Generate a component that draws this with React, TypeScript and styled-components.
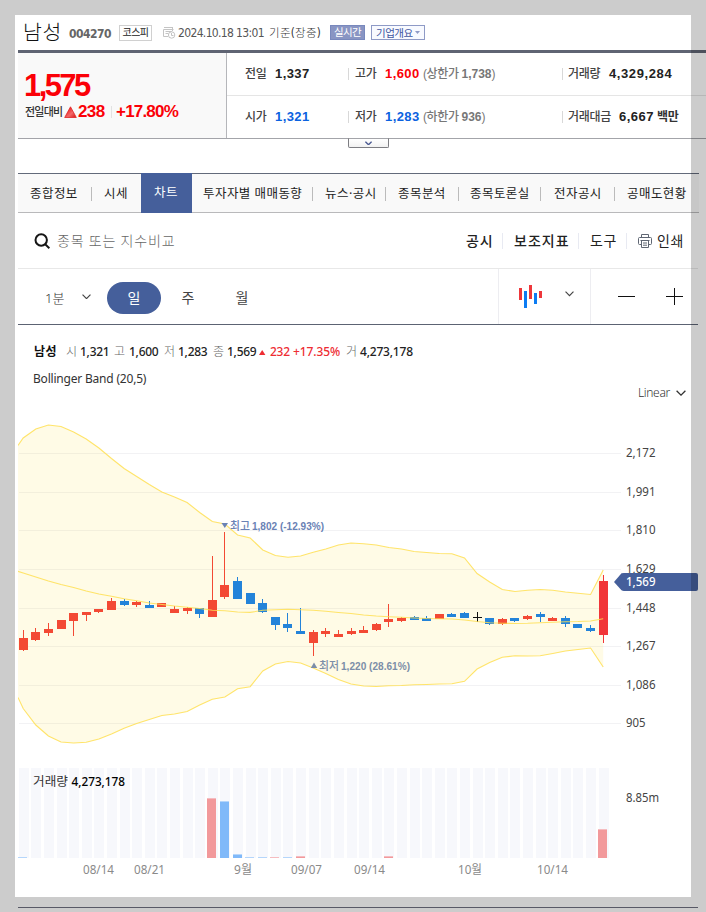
import React from 'react';
import styled, { createGlobalStyle, css } from 'styled-components';

const GlobalStyle = createGlobalStyle`
  * { box-sizing: border-box; }
  html, body { margin: 0; padding: 0; background: #fff; }
  body { overflow: hidden; font-family: "Noto Sans", "Noto Sans CJK KR", sans-serif; }
`;

const gulim = '"DejaVu Sans Condensed", "DejaVu Sans", "Noto Sans CJK KR", sans-serif';
const arial = '"Liberation Sans", "Noto Sans CJK KR", sans-serif';
const malgun = '"Noto Sans", "Noto Sans CJK KR", sans-serif';

type TextProps = {
  $size?: number;
  $weight?: number;
  $color?: string;
  $track?: number;
  $drop?: number;
};

const Text = styled.span<TextProps>`
  display: block;
  white-space: nowrap;
  font-size: ${p => p.$size ?? 12}px;
  font-weight: ${p => p.$weight ?? 400};
  color: ${p => p.$color ?? '#222'};
  letter-spacing: ${p => p.$track ?? 0}px;
  ${p => p.$drop !== undefined && css`padding-top: ${p.$drop}px;`}
`;

const Page = styled.main`
  position: relative;
  width: 706px;
  height: 912px;
  padding-left: 18px;
  overflow: hidden;
  background: #fff;
  display: flex;
  flex-direction: column;
`;

/* Dims everything outside of the captured area. */
const Shade = styled.div`
  position: absolute;
  inset: 0;
  border: 15px solid rgba(0, 0, 0, 0.2);
  pointer-events: none;
`;

/* ---------- title ---------- */

const TitleBar = styled.header`
  flex: none;
  height: 53px;
  padding: 15px 0 0 5px;
  border-bottom: 3px solid #5f6473;
  display: grid;
  grid-template-columns: 46px 50px 44px 15px 152px 41px auto;
  align-items: center;
  line-height: 18px;
  font-family: ${gulim};
`;

const StockName = styled.h1`
  margin: 0;
  padding-bottom: 2px;
  font: 300 20.5px/24px ${malgun};
  letter-spacing: 0.6px;
  color: #111;
  white-space: nowrap;
`;

const MarketTag = styled.span`
  width: 33px;
  height: 16px;
  border: 1px solid #d0d0d0;
  font: 400 10px/13px ${malgun};
  letter-spacing: -0.6px;
  color: #222;
  text-align: center;
  white-space: nowrap;
`;

const DateLine = styled.div`
  display: grid;
  grid-template-columns: 91px auto;
  align-items: center;
`;

const LiveTag = styled.span`
  width: 35px;
  height: 15px;
  border: 1px solid #7888bd;
  background: #8995c3;
  color: #fff;
  font: 400 10.5px/12px ${malgun};
  letter-spacing: -0.6px;
  text-align: center;
  white-space: nowrap;
`;

const OverviewButton = styled.button`
  width: 54px;
  height: 15px;
  padding: 0 4px;
  border: 1px solid #8e9ac6;
  background: #f8faff;
  color: #40569f;
  display: flex;
  align-items: center;
  justify-content: space-between;
  font: 400 10.5px/12px ${malgun};
  letter-spacing: -0.5px;
  white-space: nowrap;
`;

/* ---------- quote summary ---------- */

const Summary = styled.section`
  flex: none;
  height: 86px;
  border-bottom: 1px solid #a3a4a9;
  display: grid;
  grid-template-columns: 209px 1fr;
  font-family: ${arial};
`;

const PriceBox = styled.div`
  padding: 17px 0 0 6px;
  background: #f9f9f9;
  border-right: 1px solid #b5b6ba;
`;

const Price = styled.div`
  height: 30px;
  line-height: 31px;
  font-size: 31px;
  font-weight: 700;
  letter-spacing: -2.6px;
  color: #fb0007;
`;

const ChangeRow = styled.div`
  margin-top: 2px;
  padding-left: 1px;
  display: grid;
  grid-template-columns: 39px 14px 33px 5px auto;
  align-items: center;
  line-height: 20px;
`;

const QuoteGrid = styled.div`
  display: grid;
  grid-template-rows: 42px 43px;
`;

const QuoteRow = styled.div<{ $wideLabel?: boolean }>`
  display: grid;
  grid-template-columns: 18px 30px 73px 7px 30px 38px 139px 6px ${p => (p.$wideLabel ? 51 : 41)}px auto;
  align-items: center;
  line-height: 20px;
  & + & { border-top: 1px solid #e5e5e5; }
`;

const Limit = styled.span`
  color: #777;
  font-size: 12px;
  font-weight: 500;
  letter-spacing: -0.4px;
  white-space: nowrap;
  b { font-weight: 700; letter-spacing: 0; }
`;

const Amount = styled.div`
  display: flex;
  gap: 3px;
`;

const Bar = styled.i<{ $h?: number; $color?: string }>`
  width: 1px;
  height: ${p => p.$h ?? 12}px;
  background: ${p => p.$color ?? '#d8d8d8'};
`;

const ExpandButton = styled.button`
  flex: none;
  width: 41px;
  height: 10px;
  margin: -1px 0 0 330px;
  padding: 0;
  border: 1px solid #7d7d82;
  border-top-color: #a3a4a9;
  border-radius: 0 0 2px 2px;
  background: linear-gradient(#fff, #f2f2f2);
  display: flex;
  align-items: center;
  justify-content: center;
`;

/* ---------- tabs ---------- */

const Tabs = styled.nav`
  flex: none;
  width: 681px;
  height: 40px;
  margin-top: 25px;
  border-top: 1px solid #626a7a;
  border-bottom: 1px solid #b9b9bb;
  background: #f9f9f9;
  display: flex;
`;

const Tab = styled.a<{ $w: number; $pad: number; $active?: boolean }>`
  flex: none;
  width: ${p => p.$w}px;
  height: ${p => (p.$active ? 40 : 39)}px;
  margin-top: ${p => (p.$active ? -1 : 0)}px;
  padding-left: ${p => p.$pad}px;
  background: ${p => (p.$active ? '#455f9b' : 'transparent')};
  color: ${p => (p.$active ? '#fff' : '#222')};
  font: 400 12.5px/${p => (p.$active ? 40 : 39)}px ${malgun};
  letter-spacing: 0.45px;
  white-space: nowrap;
  display: flex;
  justify-content: space-between;
  align-items: center;
`;

/* ---------- toolbars ---------- */

const SearchBar = styled.div`
  flex: none;
  width: 680px;
  height: 56px;
  border-bottom: 1px solid #e8e8e8;
  display: grid;
  grid-template-columns: 16px 23px 409px 36px 12px 64px 12px 36px 12px 19px auto;
  align-items: center;
  line-height: 20px;
  & > svg { display: block; }
`;

const RangeBar = styled.div`
  flex: none;
  width: 680px;
  height: 56px;
  border-bottom: 1px solid #5c6373;
  display: grid;
  grid-template-columns: 89px 54px 54px 283px 93px auto;
  align-items: center;
`;

const MinuteSelect = styled.div`
  padding: 0 16px 0 27px;
  display: flex;
  align-items: center;
  justify-content: space-between;
`;

const RangeButton = styled.button<{ $active?: boolean }>`
  height: 32px;
  margin-top: 3px;
  padding: 0;
  border: 0;
  border-radius: 16px;
  width: 54px;
  background: ${p => (p.$active ? '#455f9b' : 'transparent')};
  color: ${p => (p.$active ? '#fff' : '#444')};
  font: 400 14px/32px ${malgun};
`;

const ChartTypeSelect = styled.div`
  height: 55px;
  border: solid #ededf1;
  border-width: 0 1px;
  padding: 0 16px 0 20px;
  display: flex;
  align-items: center;
  justify-content: space-between;
  & > svg:last-child { margin-bottom: 5px; }
`;

const ZoomButtons = styled.div`
  padding: 0 15px 0 27px;
  display: flex;
  align-items: center;
  justify-content: space-between;
`;

/* ---------- chart ---------- */

const Legend = styled.div`
  flex: none;
  height: 28px;
  margin-top: 13px;
  padding-left: 16px;
  display: grid;
  grid-template-columns: 32px 14px 34px 15px 35px 14px 35px 14px 32px 11px 23px 53px 14px auto;
  align-items: center;
  line-height: 28px;
`;

const IndicatorRow = styled.div`
  flex: none;
  width: 680px;
  height: 40px;
  padding: 0 12px 0 15px;
  display: flex;
  justify-content: space-between;
`;

const ScaleSelect = styled.div`
  margin-top: 17px;
  height: 20px;
  display: flex;
  align-items: center;
  gap: 6px;
  line-height: 20px;
`;

const Plot = styled.svg`
  flex: none;
  display: block;
  width: 680px;
  height: 484px;
  font-family: ${malgun};
`;

const Footer = styled.div`
  flex: none;
  width: 680px;
  height: 18px;
  border-bottom: 1px solid #6e7080;
`;

const Chevron = ({ w = 9, color = '#444', stroke = 1.3 }: { w?: number; color?: string; stroke?: number }) => (
  <svg width={w} height={w / 2 + 1} viewBox="0 0 10 6" fill="none" stroke={color} strokeWidth={stroke}>
    <path d="M0.6 0.7 5 5.1 9.4 0.7" />
  </svg>
);

const step = 12.609;
const centre = (i: number) => 23.5 + i * step;
const candleX = (i: number) => Math.round(centre(i) - 4.8);
const RED = '#f34934';
const BLUE = '#2383d9';

// [colour, body top, body bottom, high, low], vertical values in thirds of a pixel below y = 500
type Candle = [string, number, number, number, number];
const candles: Candle[] = [
  ['r', 414, 450, 390, 452], ['r', 396, 420, 384, 422], ['r', 387, 399, 369, 407], ['r', 360, 387, 360, 388],
  ['r', 339, 363, 339, 407], ['r', 336, 345, 336, 364], ['r', 327, 336, 327, 338], ['r', 303, 330, 295, 330],
  ['b', 303, 315, 296, 319], ['r', 306, 315, 303, 320], ['b', 315, 324, 303, 324], ['r', 309, 321, 309, 321],
  ['r', 327, 339, 317, 339], ['r', 324, 333, 321, 341], ['b', 324, 342, 324, 353], ['r', 300, 351, 168, 351],
  ['r', 255, 291, 96, 296], ['b', 243, 297, 232, 297], ['b', 279, 312, 279, 312], ['b', 309, 336, 298, 338],
  ['b', 351, 375, 351, 389], ['b', 372, 384, 340, 395], ['b', 393, 402, 324, 402], ['r', 396, 429, 390, 468],
  ['r', 393, 402, 384, 410], ['r', 402, 411, 390, 411], ['r', 393, 402, 385, 404], ['r', 390, 399, 378, 399],
  ['r', 372, 390, 369, 392], ['r', 357, 366, 312, 381], ['r', 354, 363, 351, 366], ['b', 351, 360, 348, 361],
  ['b', 354, 363, 348, 363], ['r', 342, 357, 342, 357], ['b', 342, 351, 339, 351], ['b', 339, 354, 337, 354],
  ['k', 351, 354, 337, 366], ['b', 354, 372, 354, 375], ['r', 357, 372, 354, 375], ['b', 354, 363, 354, 365],
  ['r', 348, 357, 345, 360], ['b', 342, 351, 336, 367], ['r', 354, 363, 351, 363], ['b', 354, 372, 348, 381],
  ['b', 372, 384, 372, 384], ['b', 384, 393, 375, 395], ['x', 243, 405, 225, 429],
];
const candleColor: Record<string, string> = { r: RED, b: BLUE, k: '#111', x: '#f13538' };

const upper = [438, 429, 425, 426.5, 432, 439, 448, 458.5, 468.5, 476.5, 484.5, 492, 497, 502.5, 512.5, 521.5, 524, 535, 538, 550, 555.5, 557.3, 556, 552.3, 549, 545, 543, 543.7, 545, 547.5, 549, 551.5, 552.5, 553.5, 553.7, 558, 573.5, 582, 589.5, 591.5, 590.3, 589.5, 590.3, 592, 593.2, 594.5, 570];
const middle = [573, 577, 581, 584.5, 587.5, 591, 594, 596.3, 598.7, 600.8, 603, 604.5, 606, 607.2, 608.5, 610.2, 610.8, 612, 612.4, 610.3, 609.8, 609.3, 609.7, 610.2, 611.3, 612.5, 613.5, 615, 616, 616.7, 617.3, 618, 618.5, 618.7, 619, 620, 621.5, 622.7, 623.3, 623.5, 623.3, 622.8, 622.3, 621.7, 621.5, 621, 618.7];
const lower = [708.5, 725, 736, 742, 743, 742.2, 739, 734, 728.3, 723.5, 719.5, 715.5, 714, 711.5, 705, 699.3, 697, 688.7, 686.7, 671, 664, 661.5, 663, 668, 673.5, 679.5, 684, 686, 686.5, 685.8, 685.5, 684.8, 684.5, 684, 683.8, 681.3, 669, 662.5, 657.3, 655.7, 656, 655.8, 653.5, 651, 649.5, 648, 667];

const points = (first: number, values: number[]) =>
  [`18,${first}`, ...values.map((v, i) => `${(centre(i) - 0.3).toFixed(1)},${v}`)];

const upperPts = points(445.5, upper);
const middlePts = points(571.3, middle);
const lowerPts = points(697.5, lower);

const ticks: [string, number][] = [
  ['2,172', 453], ['1,991', 492], ['1,810', 530], ['1,629', 569], ['1,448', 608], ['1,267', 646], ['1,086', 685], ['905', 723],
];

const volumes: [number, string, number][] = [
  [0, 'b', 857], [15, 'r', 798], [16, 'b', 801], [17, 'b', 854], [18, 'b', 857], [19, 'b', 857],
  [20, 'r', 857], [21, 'b', 857], [22, 'r', 856], [29, 'r', 856], [46, 'r', 829],
];

const dates: [string, number, number][] = [
  ['08/14', 83, 31], ['08/21', 134, 31], ['9월', 234, 18], ['09/07', 291, 31], ['09/14', 354, 31], ['10월', 458, 24], ['10/14', 537, 31],
];

const PriceChart = () => (
  <Plot viewBox="18 406 680 484">
    <g shapeRendering="crispEdges">
      {ticks.map(([t, y]) => <rect key={t} x={19} y={y} width={602} height={1} fill="#f2f2f4" />)}
      {candles.map((_, i) => <rect key={i} x={candleX(i)} y={768} width={10} height={90} fill="#f7f8fc" />)}
    </g>
    <polygon points={[...upperPts, ...[...lowerPts].reverse()].join(' ')} fill="#ffe14d" fillOpacity={0.14} />
    <g shapeRendering="crispEdges">
      {candles.map(([c, top, bottom, high, low], i) => (
        <g key={i} fill={candleColor[c]}>
          <rect x={candleX(i)} y={500 + top / 3} width={9} height={(bottom - top) / 3} />
          <rect x={candleX(i) + 4} y={500 + high / 3} width={1} height={(low - high) / 3} />
        </g>
      ))}
    </g>
    <g fill="none" stroke="#ffdf52" strokeWidth={1.1} strokeOpacity={0.85}>
      <polyline points={upperPts.join(' ')} />
      <polyline points={middlePts.join(' ')} />
      <polyline points={lowerPts.join(' ')} />
    </g>

    <g fill="#6a82b5" fontFamily={arial} fontSize={11} fontWeight={700}>
      <path d="M221.5 523h6.5l-3.2 5z" />
      <text x={230} y={530} textLength={20} fontWeight={500} lengthAdjust="spacingAndGlyphs">최고</text>
      <text x={252} y={530} textLength={72} lengthAdjust="spacingAndGlyphs">1,802 (-12.93%)</text>
    </g>
    <g fill="#7c8ea8" fontFamily={arial} fontSize={11} fontWeight={700}>
      <path d="M310.8 668h6.4l-3.2-5.5z" />
      <text x={319} y={670} textLength={20} fontWeight={500} lengthAdjust="spacingAndGlyphs">최저</text>
      <text x={341} y={670} textLength={69} lengthAdjust="spacingAndGlyphs">1,220 (28.61%)</text>
    </g>

    <g fill="#444" fontSize={12}>
      {ticks.map(([t, y]) => (
        <text key={t} x={626} y={y + 4} textLength={t.length > 3 ? 29.5 : 19.5} lengthAdjust="spacingAndGlyphs">{t}</text>
      ))}
      <text x={626} y={802} textLength={33} lengthAdjust="spacingAndGlyphs">8.85m</text>
    </g>
    <path d="M614 582 621.5 573.3Q622.5 573 624 573H696Q698 573 698 575V589Q698 591 696 591H624Q622.5 591 621.5 590.2Z" fill="#455f9b" />
    <text x={626} y={586} fontSize={12} fontWeight={500} fill="#fff" textLength={29.5} lengthAdjust="spacingAndGlyphs">1,569</text>

    <g shapeRendering="crispEdges">
      {volumes.map(([i, c, y]) => {
        const x = Math.round(centre(i) - 5.3);
        return (
          <g key={i}>
            <rect x={x} y={y} width={9} height={858 - y} fill={c === 'r' ? '#f2999b' : '#80b9f9'} />
            <rect x={x} y={y} width={9} height={1} fill={c === 'r' ? '#f5bcc0' : '#b5d6fb'} />
          </g>
        );
      })}
    </g>
    <text x={33} y={786} fontSize={12} fill="#333" textLength={35} lengthAdjust="spacingAndGlyphs">거래량</text>
    <text x={71.5} y={786} fontSize={12} fontWeight={500} fill="#000" textLength={53.5} lengthAdjust="spacingAndGlyphs">4,273,178</text>
    <g fill="#8a8a8a" fontSize={12}>
      {dates.map(([d, x, w]) => <text key={d} x={x} y={874} textLength={w} lengthAdjust="spacingAndGlyphs">{d}</text>)}
    </g>
  </Plot>
);

const CalendarClock = () => (
  <svg width="13" height="13" viewBox="0 0 13 13" fill="none" stroke="#c4c4c4">
    <path d="M1 1.5H9.5M0.5 3.5H10.5M2.5 5.5H9M0.5 3.5V10.5H5M2.5 7.5H5.5M9.5 1V5" />
    <circle cx="8.6" cy="9" r="3.2" fill="#fff" />
    <path d="M8.5 7V9.5H10.5" />
  </svg>
);

export default function App() {
  return (
    <>
      <GlobalStyle />
      <Page>
        <TitleBar>
          <StockName>남성</StockName>
          <Text $size={12} $weight={700} $color="#666" $track={-0.5} $drop={2}>004270</Text>
          <MarketTag>코스피</MarketTag>
          <CalendarClock />
          <DateLine>
            <Text $size={12} $color="#555" $track={-0.65}>2024.10.18 13:01</Text>
            <Text $size={11.5} $weight={300} $color="#333" $track={0.3}>기준(장중)</Text>
          </DateLine>
          <LiveTag>실시간</LiveTag>
          <OverviewButton>
            기업개요
            <svg width="5" height="3" viewBox="0 0 5 3"><path d="M0 0H5L2.5 3Z" fill="#8e9ac6" /></svg>
          </OverviewButton>
        </TitleBar>

        <Summary>
          <PriceBox>
            <Price>1,575</Price>
            <ChangeRow>
              <Text $size={11} $weight={500} $color="#333" $track={-0.8}>전일대비</Text>
              <svg width="13" height="12" viewBox="0 0 13 12">
                <defs>
                  <linearGradient id="rise" x1="0" y1="0" x2="1" y2="1">
                    <stop offset="0.2" stopColor="#ef1c1c" />
                    <stop offset="0.6" stopColor="#f26a6a" />
                    <stop offset="1" stopColor="#d81010" />
                  </linearGradient>
                </defs>
                <path d="M6.5 0.8 12.3 11.5H0.7Z" fill="url(#rise)" stroke="#de2525" strokeWidth="0.8" />
              </svg>
              <Text $size={17} $weight={700} $color="#fb0007" $track={-0.6}>238</Text>
              <Bar $color="#e2e2e2" />
              <Text $size={17} $weight={700} $color="#fb0007" $track={-0.8}>+17.80%</Text>
            </ChangeRow>
          </PriceBox>
          <QuoteGrid>
            <QuoteRow>
              <span />
              <Text $size={12} $weight={500} $color="#444" $track={-0.2}>전일</Text>
              <Text $size={13} $weight={700} $track={0.4}>1,337</Text>
              <Bar />
              <Text $size={12} $weight={500} $color="#444" $track={-0.2}>고가</Text>
              <Text $size={13} $weight={700} $color="#fb0007" $track={0.4}>1,600</Text>
              <Limit>(상한가 <b>1,738</b>)</Limit>
              <Bar />
              <Text $size={12} $weight={500} $color="#444" $track={-0.3}>거래량</Text>
              <Text $size={13} $weight={700} $track={0.6}>4,329,284</Text>
            </QuoteRow>
            <QuoteRow $wideLabel>
              <span />
              <Text $size={12} $weight={500} $color="#444" $track={-0.2}>시가</Text>
              <Text $size={13} $weight={700} $color="#0b62e0" $track={0.4}>1,321</Text>
              <Bar />
              <Text $size={12} $weight={500} $color="#444" $track={-0.2}>저가</Text>
              <Text $size={13} $weight={700} $color="#0b62e0" $track={0.4}>1,283</Text>
              <Limit>(하한가 <b>936</b>)</Limit>
              <Bar />
              <Text $size={12} $weight={500} $color="#444" $track={-0.3}>거래대금</Text>
              <Amount>
                <Text $size={13} $weight={700} $track={0.5}>6,667</Text>
                <Text $size={12} $weight={700} $color="#333" $track={-0.4}>백만</Text>
              </Amount>
            </QuoteRow>
          </QuoteGrid>
        </Summary>
        <ExpandButton><Chevron w={7} color="#4b5a92" stroke={2} /></ExpandButton>

        <Tabs>
          <Tab $w={74} $pad={12}>종합정보<Bar $h={14} $color="#bbb" /></Tab>
          <Tab $w={49} $pad={12}>시세</Tab>
          <Tab $w={51} $pad={13} $active>차트</Tab>
          <Tab $w={121} $pad={11}>투자자별 매매동향<Bar $h={14} $color="#bbb" /></Tab>
          <Tab $w={73} $pad={12}>뉴스·공시<Bar $h={14} $color="#bbb" /></Tab>
          <Tab $w={73} $pad={12}>종목분석<Bar $h={14} $color="#bbb" /></Tab>
          <Tab $w={82} $pad={11}>종목토론실<Bar $h={14} $color="#bbb" /></Tab>
          <Tab $w={74} $pad={13}>전자공시<Bar $h={14} $color="#bbb" /></Tab>
          <Tab $w={84} $pad={12}>공매도현황</Tab>
        </Tabs>

        <SearchBar>
          <span />
          <svg width="16" height="16" viewBox="0 0 16 16" fill="none" stroke="#161616" strokeWidth="2">
            <circle cx="7.2" cy="7" r="5.7" />
            <path d="M11.2 11.2 15.4 15.2" />
          </svg>
          <Text $size={14} $weight={300} $color="#666" $track={0.8}>종목 또는 지수비교</Text>
          <Text $size={14} $weight={500} $track={0.8}>공시</Text>
          <Bar $h={16} $color="#e8eaf2" />
          <Text $size={14} $weight={500} $track={1}>보조지표</Text>
          <Bar $h={16} $color="#e8eaf2" />
          <Text $size={14} $track={0.7}>도구</Text>
          <Bar $h={16} $color="#e8eaf2" />
          <svg width="14" height="14" viewBox="0 0 14 14" fill="none" stroke="#5f6673">
            <path d="M3.5 3.5V0.5H10.5V3.5M3.5 10.5H1.5Q0.5 10.5 0.5 9.5V4.5Q0.5 3.5 1.5 3.5H12.5Q13.5 3.5 13.5 4.5V9.5Q13.5 10.5 12.5 10.5H10.5M2.5 6.5H11.5M3.5 6.5V13.5H10.5V6.5M5 9H9M5 11.2H9" />
          </svg>
          <Text $size={14} $track={0.7}>인쇄</Text>
        </SearchBar>

        <RangeBar>
          <MinuteSelect><Text $size={13} $weight={300} $color="#333" $drop={1}>1분</Text><Chevron w={9} /></MinuteSelect>
          <RangeButton $active>일</RangeButton>
          <RangeButton>주</RangeButton>
          <RangeButton>월</RangeButton>
          <ChartTypeSelect>
            <svg width="23" height="24" viewBox="0 0 23 24" shapeRendering="crispEdges">
              <path d="M0 3h3v12H0zM10 0h3v14h-3zM20 6h3v7h-3z" fill="#ee373b" />
              <path d="M5 6h3v17H5zM15 8h3v11h-3z" fill="#0c7cf3" />
            </svg>
            <Chevron w={9} />
          </ChartTypeSelect>
          <ZoomButtons>
            <svg width="17" height="17" viewBox="0 0 17 17"><path d="M0 8H17V9H0z" fill="#111" /></svg>
            <svg width="17" height="17" viewBox="0 0 17 17"><path d="M0 8H17V9H0zM8 0H9V17H8z" fill="#111" /></svg>
          </ZoomButtons>
        </RangeBar>

        <Legend>
          <Text $weight={600} $color="#111" $track={0.5}>남성</Text>
          <Text $weight={300} $color="#666">시</Text>
          <Text $weight={500} $track={-0.25}>1,321</Text>
          <Text $weight={300} $color="#666">고</Text>
          <Text $weight={500} $track={-0.25}>1,600</Text>
          <Text $weight={300} $color="#666">저</Text>
          <Text $weight={500} $track={-0.25}>1,283</Text>
          <Text $weight={300} $color="#666">종</Text>
          <Text $weight={500} $track={-0.25}>1,569</Text>
          <svg width="7" height="5" viewBox="0 0 7 5"><path d="M0 5H6.4L3.2 0Z" fill="#ee2d33" /></svg>
          <Text $weight={500} $color="#ee2d33" $track={-0.25}>232</Text>
          <Text $weight={500} $color="#ee2d33" $track={-0.1}>+17.35%</Text>
          <Text $weight={300} $color="#666">거</Text>
          <Text $weight={500} $track={-0.2}>4,273,178</Text>
        </Legend>
        <IndicatorRow>
          <Text $color="#333" $track={-0.2} $drop={4}>Bollinger Band (20,5)</Text>
          <ScaleSelect><Text $weight={300} $color="#333" $track={-0.3}>Linear</Text><Chevron w={10} color="#333" /></ScaleSelect>
        </IndicatorRow>
        <PriceChart />
        <Footer />
        <Shade />
      </Page>
    </>
  );
}
